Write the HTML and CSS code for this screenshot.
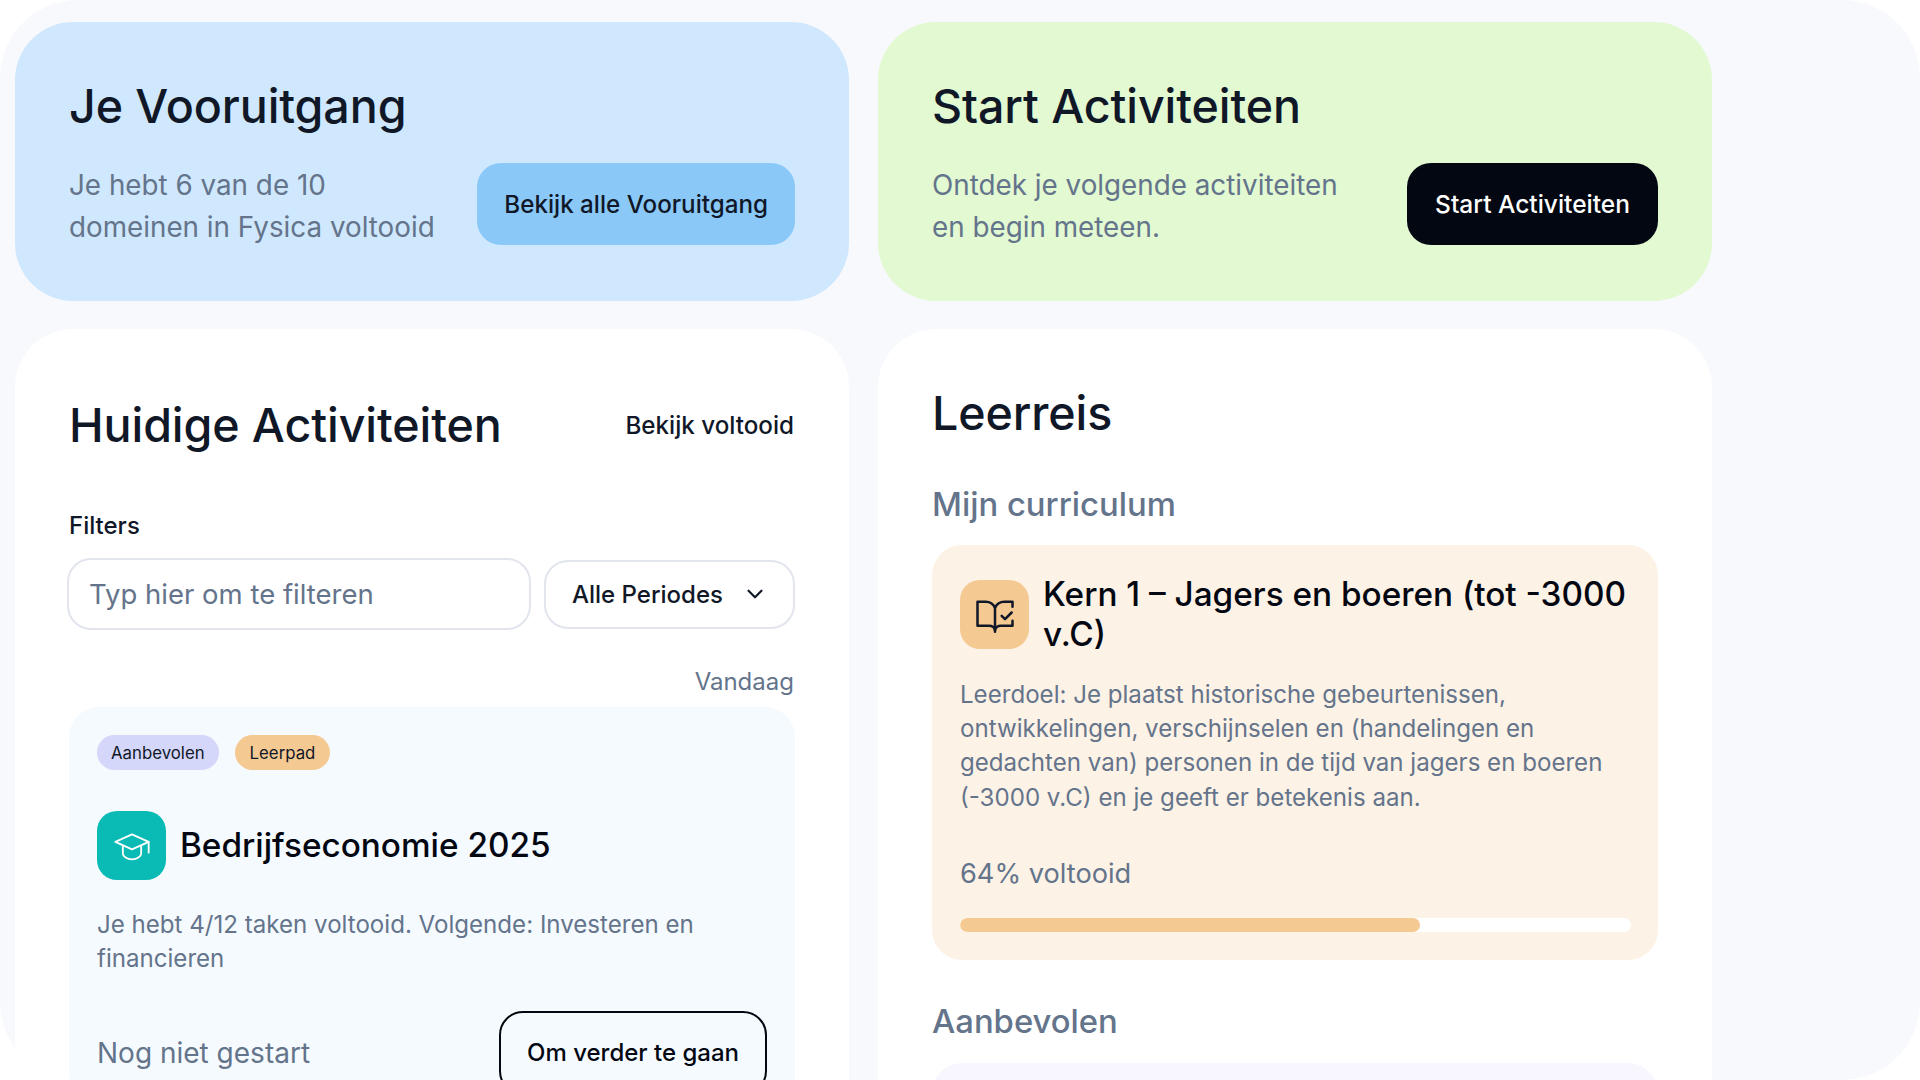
FILE: index.html
```html
<!DOCTYPE html>
<html lang="nl">
<head>
    <meta charset="UTF-8">
    <meta name="viewport" content="width=device-width, initial-scale=1.0">
    <title>Dashboard</title>
    <link rel="stylesheet" href="styles.css">
</head>
<body>

<div class="frame">
    <div class="grid">
        <section class="banner banner-blue">
            <h2>Je Vooruitgang</h2>
            <div class="banner-row">
                <p>Je hebt 6 van de 10<br>domeinen in Fysica voltooid</p>
                <button class="btn-blue">Bekijk alle Vooruitgang</button>
            </div>
        </section>

        <section class="banner banner-green">
            <h2>Start Activiteiten</h2>
            <div class="banner-row">
                <p>Ontdek je volgende activiteiten<br>en begin meteen.</p>
                <button class="btn-dark">Start Activiteiten</button>
            </div>
        </section>

        <section class="panel panel-left">
            <div class="panel-head">
                <h2>Huidige Activiteiten</h2>
                <a class="link" href="#">Bekijk voltooid</a>
            </div>

            <label class="filter-label" for="filter">Filters</label>
            <div class="filters">
                <input type="text" id="filter" placeholder="Typ hier om te filteren">
                <div class="select">
                    <span>Alle Periodes</span>
                    <svg width="26" height="26" viewBox="0 0 24 24" fill="none" stroke="#101828" stroke-width="2" stroke-linecap="round" stroke-linejoin="round"><path d="M6 9l6 6 6-6"/></svg>
                </div>
            </div>

            <div class="day">Vandaag</div>

            <div class="activity">
                <div class="pills">
                    <span class="pill pill-purple">Aanbevolen</span>
                    <span class="pill pill-orange">Leerpad</span>
                </div>
                <div class="activity-title">
                    <div class="icon icon-teal">
                        <svg width="40" height="40" viewBox="0 0 24 24" fill="none" stroke="#fff" stroke-width="1.100" stroke-linecap="round" stroke-linejoin="round">
                            <path d="M12 5L2 9.500l10 4.500 10-4.500z"/>
                            <path d="M6.500 12v4.500c0 1.800 2.500 3.500 5.500 3.500s5.500-1.700 5.500-3.500V12"/>
                            <path d="M22 9.500V16"/>
                        </svg>
                    </div>
                    <h3>Bedrijfseconomie 2025</h3>
                </div>
                <p class="small">Je hebt 4/12 taken voltooid. Volgende: Investeren en financieren</p>
                <div class="activity-foot">
                    <span class="status">Nog niet gestart</span>
                    <button class="btn-outline">Om verder te gaan</button>
                </div>
            </div>
        </section>

        <section class="panel panel-right">
            <h2>Leerreis</h2>
            <h4>Mijn curriculum</h4>
            <div class="course">
                <div class="course-title">
                    <div class="icon icon-orange">
                        <svg width="40" height="40" viewBox="0 0 24 24" fill="none" stroke="#101828" stroke-width="1.500" stroke-linecap="round" stroke-linejoin="round">
                            <path d="M12 7.500C11 5.500 9 4 6.500 4H1.500v14.500h7c1.700 0 3 .9 3.500 2.500"/>
                            <path d="M12 7.500C13 5.500 15 4 17.500 4h5v3"/>
                            <path d="M22.500 15.500v3h-7c-1.700 0-3 .9-3.500 2.500"/>
                            <path d="M12 7.500V22"/>
                            <path d="M16 12.500l2 2 4-4"/>
                        </svg>
                    </div>
                    <h3>Kern 1 – Jagers en boeren (tot -3000 v.C)</h3>
                </div>
                <p class="small">Leerdoel: Je plaatst historische gebeurtenissen, ontwikkelingen, verschijnselen en (handelingen en gedachten van) personen in de tijd van jagers en boeren (-3000 v.C) en je geeft er betekenis aan.</p>
                <div class="percent">64% voltooid</div>
                <div class="bar"><div class="bar-fill" style="width: 68.6%"></div></div>
            </div>
            <h4 class="next-head">Aanbevolen</h4>
            <div class="course course-next"></div>
        </section>
    </div>
</div>

</body>
</html>
```

FILE: styles.css
```css
* {
    box-sizing: border-box;
}
body {
    font-family: Inter, "Liberation Sans", sans-serif;
    background-color: #fff;
    color: #101828;
    margin: 0;
    padding: 0;
}
h2, h3, h4, p {
    margin: 0;
}
button {
    font-family: inherit;
    cursor: pointer;
}
.frame {
    height: 100vh;
    overflow: hidden;
    background-color: #f8f9fd;
    border-radius: 78px;
    padding: 22px 15px 0;
}
.grid {
    width: 1697px;
    display: grid;
    grid-template-columns: 834px 834px;
    grid-template-rows: 279px auto;
    gap: 28px 29px;
}
.banner {
    border-radius: 58px;
    padding: 55px 54px 0;
}
.banner-blue {
    background-color: #cfe8fd;
}
.banner-green {
    background-color: #e2f9d2;
}
.banner h2, .panel h2 {
    font-size: 46.600px;
    line-height: 58px;
    font-weight: 500;
    letter-spacing: -0.1px;
}
.banner-row {
    display: flex;
    justify-content: space-between;
    align-items: flex-start;
    margin-top: 28px;
}
.banner-row p {
    margin-top: 2px;
    font-size: 27.800px;
    line-height: 41.500px;
    color: #64748b;
}
.banner-row button {
    height: 82px;
    border: none;
    border-radius: 24px;
    padding: 0 27px;
    font-size: 24.200px;
    font-weight: 500;
}
.btn-blue {
    background-color: #8ac8f8;
    color: #101828;
}
.banner-row .btn-dark {
    background-color: #030712;
    color: #fff;
    padding: 0 28px;
    font-size: 24.500px;
}
.panel {
    background-color: #fff;
    border-radius: 58px 58px 0 0;
    padding: 0 54px;
    height: 760px;
}
.panel-left {
    padding-top: 67px;
}
.panel-head {
    display: flex;
    justify-content: space-between;
    align-items: center;
}
.link {
    color: #101828;
    text-decoration: none;
    font-size: 24.200px;
    font-weight: 500;
    margin-right: 1px;
}
.filter-label {
    display: block;
    margin-top: 57px;
    font-size: 24px;
    line-height: 30px;
    font-weight: 500;
}
.filters {
    display: flex;
    align-items: center;
    gap: 13px;
    margin-top: 17px;
    margin-left: -2px;
}
input {
    width: 464px;
    height: 72px;
    border: 2px solid #e2e5ee;
    border-radius: 24px;
    padding: 0 20px;
    font-family: inherit;
    font-size: 27.500px;
    background-color: #fff;
}
input::placeholder {
    color: #64748b;
    opacity: 1;
}
.select {
    width: 252px;
    height: 69px;
    border: 2px solid #e2e5ee;
    border-radius: 24px;
    padding: 0 25px 0 26px;
    display: flex;
    justify-content: space-between;
    align-items: center;
    font-size: 24px;
    font-weight: 500;
}
.day {
    margin-top: 37px;
    margin-right: 1px;
    text-align: right;
    color: #64748b;
    font-size: 24px;
    line-height: 30px;
}
.activity {
    margin-top: 10px;
    background-color: #f5faff;
    border-radius: 30px;
    padding: 28px 28px 0;
    height: 420px;
}
.pills {
    display: flex;
    gap: 16px;
}
.pill {
    height: 35px;
    border-radius: 18px;
    padding: 0 14px;
    display: flex;
    align-items: center;
    font-size: 16.800px;
}
.pill-purple {
    background-color: #d4d6fa;
}
.pill-orange {
    background-color: #f5c992;
    padding: 0 15px;
}
.activity-title {
    display: flex;
    align-items: center;
    gap: 14px;
    margin-top: 41px;
}
.icon {
    flex-shrink: 0;
    width: 69px;
    height: 69px;
    border-radius: 20px;
    display: flex;
    justify-content: center;
    align-items: center;
}
.icon-teal {
    background-color: #0abab5;
}
.icon-orange {
    background-color: #f5c992;
}
h3 {
    font-size: 33.300px;
    line-height: 40.400px;
    font-weight: 500;
    color: #030712;
}
.small {
    font-size: 24.100px;
    line-height: 34.300px;
    color: #64748b;
}
.activity .small {
    margin-top: 28px;
}
.activity-foot {
    display: flex;
    justify-content: space-between;
    align-items: center;
    margin-top: 34px;
}
.status {
    font-size: 28px;
    color: #64748b;
}
.btn-outline {
    height: 84px;
    padding: 0 26px;
    background: transparent;
    border: 2px solid #030712;
    border-radius: 24px;
    font-size: 24px;
    font-weight: 500;
    color: #030712;
}
.panel-right {
    padding-top: 55px;
}
h4 {
    margin-top: 42px;
    font-size: 32.800px;
    line-height: 40px;
    font-weight: 500;
    color: #64748b;
}
.course {
    margin-top: 21px;
    background-color: #fdf2e6;
    border-radius: 30px;
    padding: 35px 27px 28px 28px;
}
.course-title {
    display: flex;
    gap: 14px;
    align-items: flex-start;
}
.course-title h3 {
    margin-top: -6px;
}
.course .small {
    margin-top: 23px;
}
.percent {
    margin-top: 42px;
    font-size: 27.200px;
    line-height: 34px;
    color: #64748b;
}
.bar {
    margin-top: 27px;
    height: 14px;
    border-radius: 7px;
    background-color: #fff;
    overflow: hidden;
}
.bar-fill {
    height: 100%;
    border-radius: 7px;
    background-color: #f5c992;
}
.next-head {
    margin-top: 41px;
}
.course-next {
    height: 80px;
    margin-top: 22px;
    background-color: #f8f7ff;
    padding: 0;
}
```
